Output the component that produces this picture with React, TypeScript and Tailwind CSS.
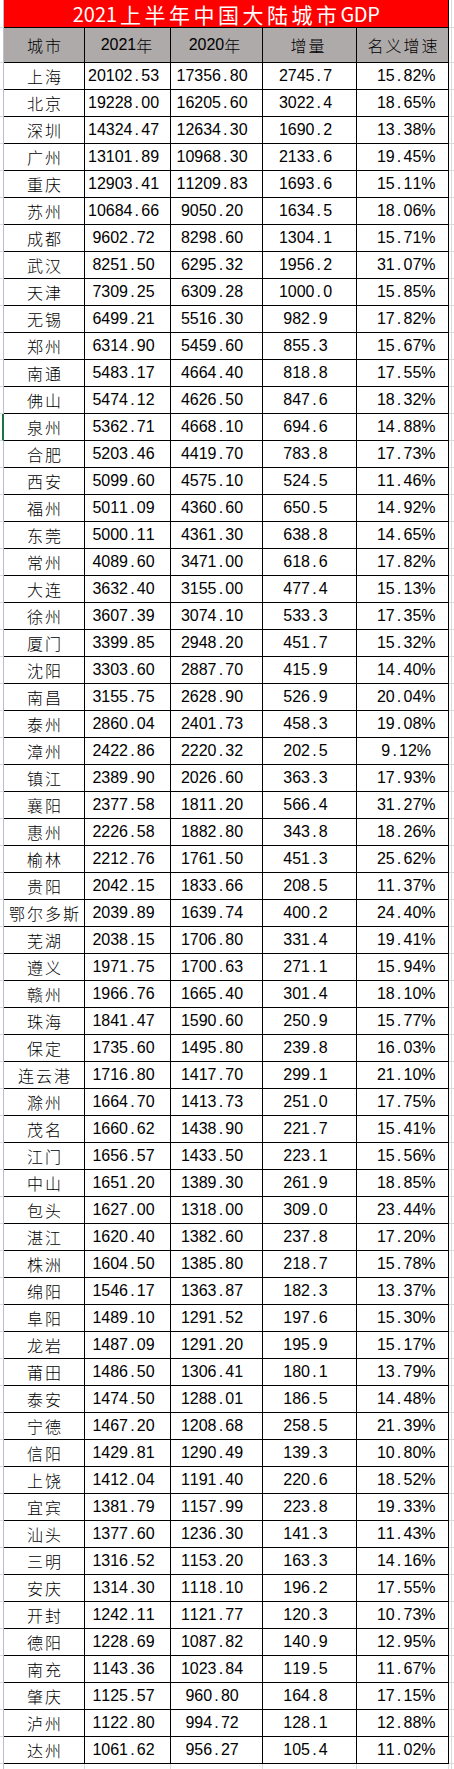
import React from 'react';

type Row = [string, string, string, string, string];

const rows: Row[] = [
  ['上海', '20102.53', '17356.80', '2745.7', '15.82%'],
  ['北京', '19228.00', '16205.60', '3022.4', '18.65%'],
  ['深圳', '14324.47', '12634.30', '1690.2', '13.38%'],
  ['广州', '13101.89', '10968.30', '2133.6', '19.45%'],
  ['重庆', '12903.41', '11209.83', '1693.6', '15.11%'],
  ['苏州', '10684.66', '9050.20', '1634.5', '18.06%'],
  ['成都', '9602.72', '8298.60', '1304.1', '15.71%'],
  ['武汉', '8251.50', '6295.32', '1956.2', '31.07%'],
  ['天津', '7309.25', '6309.28', '1000.0', '15.85%'],
  ['无锡', '6499.21', '5516.30', '982.9', '17.82%'],
  ['郑州', '6314.90', '5459.60', '855.3', '15.67%'],
  ['南通', '5483.17', '4664.40', '818.8', '17.55%'],
  ['佛山', '5474.12', '4626.50', '847.6', '18.32%'],
  ['泉州', '5362.71', '4668.10', '694.6', '14.88%'],
  ['合肥', '5203.46', '4419.70', '783.8', '17.73%'],
  ['西安', '5099.60', '4575.10', '524.5', '11.46%'],
  ['福州', '5011.09', '4360.60', '650.5', '14.92%'],
  ['东莞', '5000.11', '4361.30', '638.8', '14.65%'],
  ['常州', '4089.60', '3471.00', '618.6', '17.82%'],
  ['大连', '3632.40', '3155.00', '477.4', '15.13%'],
  ['徐州', '3607.39', '3074.10', '533.3', '17.35%'],
  ['厦门', '3399.85', '2948.20', '451.7', '15.32%'],
  ['沈阳', '3303.60', '2887.70', '415.9', '14.40%'],
  ['南昌', '3155.75', '2628.90', '526.9', '20.04%'],
  ['泰州', '2860.04', '2401.73', '458.3', '19.08%'],
  ['漳州', '2422.86', '2220.32', '202.5', '9.12%'],
  ['镇江', '2389.90', '2026.60', '363.3', '17.93%'],
  ['襄阳', '2377.58', '1811.20', '566.4', '31.27%'],
  ['惠州', '2226.58', '1882.80', '343.8', '18.26%'],
  ['榆林', '2212.76', '1761.50', '451.3', '25.62%'],
  ['贵阳', '2042.15', '1833.66', '208.5', '11.37%'],
  ['鄂尔多斯', '2039.89', '1639.74', '400.2', '24.40%'],
  ['芜湖', '2038.15', '1706.80', '331.4', '19.41%'],
  ['遵义', '1971.75', '1700.63', '271.1', '15.94%'],
  ['赣州', '1966.76', '1665.40', '301.4', '18.10%'],
  ['珠海', '1841.47', '1590.60', '250.9', '15.77%'],
  ['保定', '1735.60', '1495.80', '239.8', '16.03%'],
  ['连云港', '1716.80', '1417.70', '299.1', '21.10%'],
  ['滁州', '1664.70', '1413.73', '251.0', '17.75%'],
  ['茂名', '1660.62', '1438.90', '221.7', '15.41%'],
  ['江门', '1656.57', '1433.50', '223.1', '15.56%'],
  ['中山', '1651.20', '1389.30', '261.9', '18.85%'],
  ['包头', '1627.00', '1318.00', '309.0', '23.44%'],
  ['湛江', '1620.40', '1382.60', '237.8', '17.20%'],
  ['株洲', '1604.50', '1385.80', '218.7', '15.78%'],
  ['绵阳', '1546.17', '1363.87', '182.3', '13.37%'],
  ['阜阳', '1489.10', '1291.52', '197.6', '15.30%'],
  ['龙岩', '1487.09', '1291.20', '195.9', '15.17%'],
  ['莆田', '1486.50', '1306.41', '180.1', '13.79%'],
  ['泰安', '1474.50', '1288.01', '186.5', '14.48%'],
  ['宁德', '1467.20', '1208.68', '258.5', '21.39%'],
  ['信阳', '1429.81', '1290.49', '139.3', '10.80%'],
  ['上饶', '1412.04', '1191.40', '220.6', '18.52%'],
  ['宜宾', '1381.79', '1157.99', '223.8', '19.33%'],
  ['汕头', '1377.60', '1236.30', '141.3', '11.43%'],
  ['三明', '1316.52', '1153.20', '163.3', '14.16%'],
  ['安庆', '1314.30', '1118.10', '196.2', '17.55%'],
  ['开封', '1242.11', '1121.77', '120.3', '10.73%'],
  ['德阳', '1228.69', '1087.82', '140.9', '12.95%'],
  ['南充', '1143.36', '1023.84', '119.5', '11.67%'],
  ['肇庆', '1125.57', '960.80', '164.8', '17.15%'],
  ['泸州', '1122.80', '994.72', '128.1', '12.88%'],
  ['达州', '1061.62', '956.27', '105.4', '11.02%'],
];

// 4px gutter | 5 table columns | trailing sheet area
const GRID = 'grid grid-cols-[4px_81px_86px_92px_94px_92px_1fr]';
const CJK = "font-['Noto_Sans_CJK_SC',sans-serif]";
const NUM = "font-['Liberation_Sans','Noto_Sans_CJK_SC',sans-serif]";

// excel-ish half-width cells: every char takes the same pitch
function Mono({ text }: { text: string }) {
  return (
    <span className={`${NUM} text-[16px] leading-[20px] whitespace-nowrap`}>
      {text.split('').map((ch, i) => (
        <span key={i} className="inline-block w-[8.875px] text-center">
          {ch}
        </span>
      ))}
    </span>
  );
}

function Gutter({ mark = false }: { mark?: boolean }) {
  return (
    <div
      className={`border-b border-b-[#dadada] ${
        mark ? 'border-r-2 border-r-[#217346]' : 'border-r border-r-[#b9bfcc]'
      }`}
    />
  );
}

function Tail() {
  return (
    <div className="flex border-b border-[#dadada]">
      <div className="w-[3px] border-r border-[#dadada]" />
    </div>
  );
}

export default function App() {
  return (
    <div className="w-[454px] h-[1769px] bg-white overflow-hidden text-black">
      <div className={`${GRID} h-[28px]`}>
        <Gutter />
        <div className="col-span-5 bg-[#ff0000] border-b border-r border-black flex items-center justify-center text-white">
          <span className={`${CJK} text-[20px] leading-[24px]`}>2021</span>
          <span className={`${CJK} text-[21px] leading-[24px] tracking-[3.5px] ml-[3px]`}>上半年中国大陆城市</span>
          <span className={`${CJK} text-[20px] leading-[24px] tracking-[-0.5px]`}>GDP</span>
        </div>
        <Tail />
      </div>

      <div className={`${GRID} h-[35px]`}>
        <Gutter />
        <div className="bg-[#aeaaaa] border-b border-r border-black flex items-center justify-center pl-[2px]">
          <span className={`${CJK} text-[16px] font-light tracking-[2px]`}>城市</span>
        </div>
        <div className="bg-[#aeaaaa] border-b border-r border-black flex items-center justify-center pr-[2px]">
          <Mono text="2021" />
          <span className={`${CJK} text-[16px] font-light`}>年</span>
        </div>
        <div className="bg-[#aeaaaa] border-b border-r border-black flex items-center justify-center pr-[4px]">
          <Mono text="2020" />
          <span className={`${CJK} text-[16px] font-light`}>年</span>
        </div>
        <div className="bg-[#aeaaaa] border-b border-r border-black flex items-center justify-center pr-[2px]">
          <span className={`${CJK} text-[16px] font-light tracking-[2px]`}>增量</span>
        </div>
        <div className="bg-[#aeaaaa] border-b border-r border-black flex items-center justify-center pl-[2px]">
          <span className={`${CJK} text-[16px] font-light tracking-[2px]`}>名义增速</span>
        </div>
        <Tail />
      </div>

      {rows.map((r, idx) => (
        <div key={r[0]} className={`${GRID} h-[27px]`}>
          <Gutter mark={idx === 13} />
          <div className="border-b border-r border-black flex items-center justify-center pl-[2px]">
            <span className={`${CJK} text-[16px] font-light leading-[20px] tracking-[2px] whitespace-nowrap`}>{r[0]}</span>
          </div>
          <div className="border-b border-r border-black flex items-center justify-center pr-[8px]">
            <Mono text={r[1]} />
          </div>
          <div className="border-b border-r border-black flex items-center justify-center pr-[9px]">
            <Mono text={r[2]} />
          </div>
          <div className="border-b border-r border-black flex items-center justify-center pr-[8px]">
            <Mono text={r[3]} />
          </div>
          <div className="border-b border-r border-black flex items-center justify-center pl-[2px]">
            <Mono text={r[4]} />
          </div>
          <Tail />
        </div>
      ))}

      <div className={`${GRID} h-[27px]`}>
        <Gutter />
        <div className="border-b border-r border-[#dadada]" />
        <div className="border-b border-r border-[#dadada]" />
        <div className="border-b border-r border-[#dadada]" />
        <div className="border-b border-r border-[#dadada]" />
        <div className="border-b border-r border-[#dadada]" />
        <Tail />
      </div>
    </div>
  );
}
